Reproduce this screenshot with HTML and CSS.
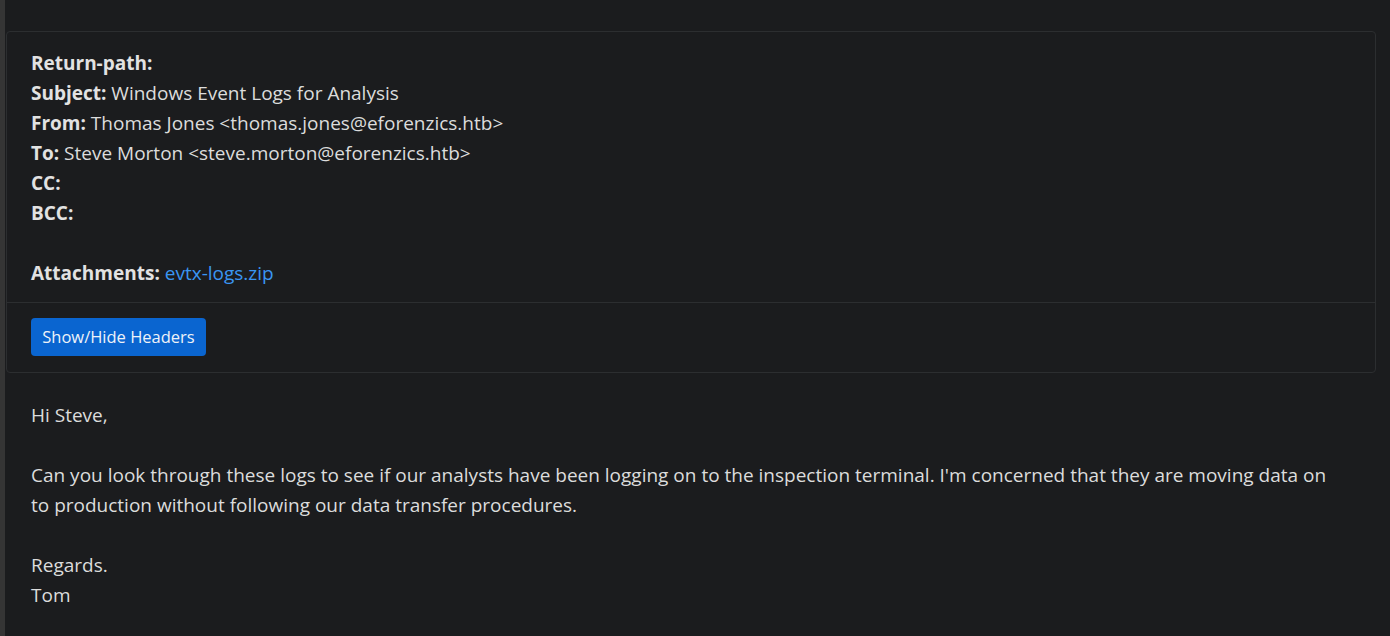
FILE: index.html
```html
<!DOCTYPE html>
<html lang="en">
<head>
<meta charset="utf-8">
<title>Email</title>
<link rel="stylesheet" href="styles.css">
</head>
<body>
<div class="page">
  <div class="side-strip"></div>
  <main class="main">
    <section class="card">
      <div class="card-body">
        <div class="hdr"><b>Return-path:</b></div>
        <div class="hdr"><b>Subject:</b> Windows Event Logs for Analysis</div>
        <div class="hdr"><b>From:</b> Thomas Jones &lt;thomas.jones@eforenzics.htb&gt;</div>
        <div class="hdr"><b>To:</b> Steve Morton &lt;steve.morton@eforenzics.htb&gt;</div>
        <div class="hdr"><b>CC:</b></div>
        <div class="hdr"><b>BCC:</b></div>
        <div class="hdr blank"></div>
        <div class="hdr"><b>Attachments:</b> <a class="link" href="#">evtx-logs.zip</a></div>
      </div>
      <div class="card-footer">
        <button class="btn" type="button">Show/Hide Headers</button>
      </div>
    </section>
    <div class="message">
      <p>Hi Steve,</p>
      <p class="blank"></p>
      <p>Can you look through these logs to see if our analysts have been logging on to the inspection terminal. I'm concerned that they are moving data on to production without following our data transfer procedures.</p>
      <p class="blank"></p>
      <p>Regards.<br>Tom</p>
    </div>
  </main>
</div>
</body>
</html>
```
FILE: styles.css
```css
html, body {
  margin: 0;
  padding: 0;
  background: #1b1c1e;
  height: 100%;
}
body {
  font-family: "Open Sans", "Noto Sans", sans-serif;
  font-size: 19px;
  line-height: 30px;
  color: #dcdcdc;
  overflow: hidden;
}
.page {
  display: flex;
  min-height: 100%;
}
.side-strip {
  width: 5px;
  flex: none;
  background: #353535;
}
.main {
  flex: 1;
  padding: 31px 14px 0 1px;
}
.card {
  border: 1px solid #2c2e30;
  border-radius: 4px;
  background: #1b1c1e;
}
.card-body {
  padding: 16px 24px 14px;
}
.hdr {
  height: 30px;
  white-space: nowrap;
}
.hdr b {
  font-weight: 700;
  color: #e2e2e2;
}
.link {
  color: #3a96f2;
  text-decoration: none;
}
.card-footer {
  border-top: 1px solid #2c2e30;
  padding: 15px 24px 16px;
}
.btn {
  display: block;
  height: 38px;
  width: 175px;
  padding: 0;
  border: 0;
  border-radius: 4px;
  background: #0a65d0;
  color: #eef2f8;
  font-family: inherit;
  font-size: 16.5px;
  line-height: 38px;
}
.message {
  padding: 27px 30px 0 25px;
}
.message p {
  margin: 0;
  min-height: 30px;
}
```
